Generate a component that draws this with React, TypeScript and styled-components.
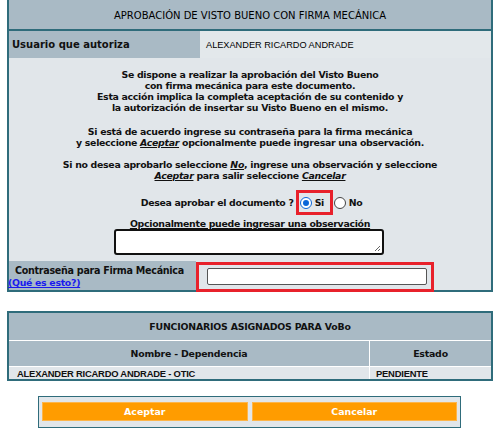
import React from "react";
import styled, { createGlobalStyle } from "styled-components";

const Global = createGlobalStyle`
  html, body { margin: 0; padding: 0; background: #ffffff; }
  body { font-family: "DejaVu Sans", Verdana, sans-serif; }
`;

const BORDER = "#2f6c7b";
const HEAD = "#a9bac5";
const LIGHT = "#e1e6ea";

const Page = styled.div`
  width: 502px;
  height: 437px;
  padding: 0 0 0 7px;
  box-sizing: border-box;
  overflow: hidden;
  display: flex;
  flex-direction: column;
  align-items: flex-start;
`;

const Panel = styled.div`
  width: 486px;
  box-sizing: border-box;
  border: 1px solid ${BORDER};
  border-width: 0 2px 0 2px;
  display: flex;
  flex-direction: column;
`;

const PanelHeader = styled.div`
  height: 31px;
  background: ${HEAD};
  border-bottom: 2px solid ${BORDER};
  display: flex;
  align-items: center;
  justify-content: center;
  font-size: 10px;
  color: #000;
  padding-top: 2px;
  box-sizing: border-box;
`;

const FieldRow = styled.div<{ $h: number; $labelW: number }>`
  display: grid;
  grid-template-columns: ${(p) => p.$labelW}px 1fr;
  height: ${(p) => p.$h}px;
`;

const LabelCell = styled.div<{ $pt?: number; $bb?: boolean }>`
  background: ${HEAD};
  font-size: 10px;
  font-weight: bold;
  display: flex;
  flex-direction: column;
  justify-content: center;
  padding-left: 3px;
  padding-top: ${(p) => p.$pt || 0}px;
  border-bottom: ${(p) => (p.$bb ? `2px solid ${BORDER}` : "none")};
  color: #111;
  white-space: nowrap;
`;

const PwLabel = styled.span`
  padding-left: 3px;
  font-size: 9.6px;
  letter-spacing: -0.3px;
  line-height: 12px;
`;

const ValueCell = styled.div`
  background: #e3e8eb;
  display: flex;
  align-items: center;
  padding-left: 6px;
  font-family: "Liberation Sans", Arial, sans-serif;
  font-size: 9.2px;
  color: #000;
`;

const Body = styled.div`
  background: ${LIGHT};
  display: flex;
  flex-direction: column;
  align-items: center;
  padding-top: 11px;
  height: 203px;
  box-sizing: border-box;
`;

const Para = styled.p<{ $mb: number }>`
  margin: 0 0 ${(p) => p.$mb}px 0;
  text-align: center;
  font-size: 9.4px;
  font-weight: bold;
  line-height: 11px;
  letter-spacing: -0.3px;
  color: #111;
  & em {
    text-decoration: underline;
  }
`;

const Question = styled.div`
  display: flex;
  align-items: center;
  font-size: 9.4px;
  font-weight: bold;
  letter-spacing: -0.3px;
  margin-top: -2px;
  margin-left: 3px;
  color: #111;
`;

const RedBox = styled.span`
  display: inline-flex;
  align-items: center;
  border: 3px solid #e8212b;
  height: 25px;
  width: 37px;
  box-sizing: border-box;
  padding: 0 0 0 1px;
  margin-left: 2px;
`;

const Radio = styled.span<{ $on?: boolean }>`
  width: 12px;
  height: 12px;
  border-radius: 50%;
  box-sizing: border-box;
  border: 1px solid ${(p) => (p.$on ? "#0a66d8" : "#444")};
  background: #fff;
  display: inline-flex;
  align-items: center;
  justify-content: center;
  margin-right: 3px;
  &::after {
    content: "";
    width: 6px;
    height: 6px;
    border-radius: 50%;
    background: ${(p) => (p.$on ? "#0a66d8" : "transparent")};
  }
`;

const NoOpt = styled.span`
  display: inline-flex;
  align-items: center;
  margin-left: 1px;
`;

const ObsLabel = styled.div`
  font-size: 9.4px;
  font-weight: bold;
  letter-spacing: -0.3px;
  text-decoration: underline;
  margin-top: 3px;
  color: #111;
`;

const TextArea = styled.div`
  width: 270px;
  height: 26px;
  box-sizing: border-box;
  border: 2px solid #111;
  border-radius: 3px;
  background: #fff;
  position: relative;
  margin-left: -2px;
`;

const Grip = styled.svg`
  position: absolute;
  right: 1px;
  bottom: 1px;
`;

const Link = styled.a`
  color: #1a1aee;
  text-decoration: underline;
  font-weight: bold;
  font-size: 9.4px;
  letter-spacing: -0.3px;
  line-height: 12px;
  margin-left: -4px;
`;

const PwCell = styled.div`
  background: ${LIGHT};
  display: flex;
  align-items: stretch;
  border-bottom: 2px solid ${BORDER};
`;

const PwBox = styled.div`
  width: 238px;
  box-sizing: border-box;
  border: 3px solid #e8212b;
  margin-top: 1px;
  margin-bottom: -2px;
  display: flex;
  align-items: center;
  padding-left: 8px;
`;

const PwInput = styled.div`
  width: 220px;
  height: 17px;
  box-sizing: border-box;
  border: 1px solid #555;
  border-radius: 2px;
  background: #fff;
  margin-top: -1px;
`;

const Table2 = styled.div`
  margin-top: 19px;
  width: 486px;
  box-sizing: border-box;
  border: 2px solid ${BORDER};
  background: #fff;
  display: grid;
  grid-template-columns: 360px 1fr;
  gap: 1px;
`;

const T2Head = styled.div<{ $span?: boolean; $h: number }>`
  grid-column: ${(p) => (p.$span ? "1 / span 2" : "auto")};
  background: ${HEAD};
  height: ${(p) => p.$h}px;
  display: flex;
  align-items: center;
  justify-content: center;
  font-size: 9.4px;
  font-weight: bold;
  letter-spacing: -0.2px;
  color: #111;
`;

const T2Cell = styled.div<{ $pl: number }>`
  background: ${LIGHT};
  height: 12px;
  display: flex;
  align-items: center;
  padding-left: ${(p) => p.$pl}px;
  font-family: "Liberation Sans", Arial, sans-serif;
  font-size: 9.4px;
  font-weight: bold;
  color: #111;
  letter-spacing: -0.2px;
`;

const ButtonsBar = styled.div`
  margin-top: 15px;
  margin-left: 31px;
  width: 423px;
  height: 32px;
  box-sizing: border-box;
  border: 1px solid ${BORDER};
  background: ${LIGHT};
  display: grid;
  grid-template-columns: 1fr 1fr;
  gap: 4px;
  padding: 5px 3px 6px 3px;
`;

const OrangeButton = styled.button`
  background: #ff9c00;
  border: 1px solid #fdb54a;
  color: #fff;
  font-family: "DejaVu Sans", Verdana, sans-serif;
  font-size: 9.4px;
  font-weight: bold;
  padding: 0;
  margin: 0;
  height: 19px;
`;

export default function App() {
  return (
    <>
      <Global />
      <Page>
        <Panel>
          <PanelHeader>APROBACIÓN DE VISTO BUENO CON FIRMA MECÁNICA</PanelHeader>
          <FieldRow $h={27} $labelW={191}>
            <LabelCell>Usuario que autoriza</LabelCell>
            <ValueCell>ALEXANDER RICARDO ANDRADE</ValueCell>
          </FieldRow>
          <Body>
            <Para $mb={13}>
              Se dispone a realizar la aprobación del Visto Bueno
              <br />
              con firma mecánica para este documento.
              <br />
              Esta acción implica la completa aceptación de su contenido y
              <br />
              la autorización de insertar su Visto Bueno en el mismo.
            </Para>
            <Para $mb={11}>
              Si está de acuerdo ingrese su contraseña para la firma mecánica
              <br />y seleccione <em>Aceptar</em> opcionalmente puede ingresar una observación.
            </Para>
            <Para $mb={11}>
              Si no desea aprobarlo seleccione <em>No</em>, ingrese una observación y seleccione
              <br />
              <em>Aceptar</em> para salir seleccione <em>Cancelar</em>
            </Para>
            <Question>
              Desea aprobar el documento ?
              <RedBox>
                <Radio $on />
                Si
              </RedBox>
              <NoOpt>
                <Radio />
                No
              </NoOpt>
            </Question>
            <ObsLabel>Opcionalmente puede ingresar una observación</ObsLabel>
            <TextArea>
              <Grip width="7" height="7" viewBox="0 0 7 7">
                <path d="M6 1 L1 6 M6 4 L4 6" stroke="#666" strokeWidth="1" />
              </Grip>
            </TextArea>
          </Body>
          <FieldRow $h={31} $labelW={187}>
            <LabelCell $pt={3} $bb>
              <PwLabel>Contraseña para Firma Mecánica</PwLabel>
              <Link>(Qué es esto?)</Link>
            </LabelCell>
            <PwCell>
              <PwBox>
                <PwInput />
              </PwBox>
            </PwCell>
          </FieldRow>
        </Panel>
        <Table2>
          <T2Head $span $h={27}>FUNCIONARIOS ASIGNADOS PARA VoBo</T2Head>
          <T2Head $h={25}>Nombre - Dependencia</T2Head>
          <T2Head $h={25}>Estado</T2Head>
          <T2Cell $pl={8}>ALEXANDER RICARDO ANDRADE - OTIC</T2Cell>
          <T2Cell $pl={6}>PENDIENTE</T2Cell>
        </Table2>
        <ButtonsBar>
          <OrangeButton>Aceptar</OrangeButton>
          <OrangeButton>Cancelar</OrangeButton>
        </ButtonsBar>
      </Page>
    </>
  );
}
